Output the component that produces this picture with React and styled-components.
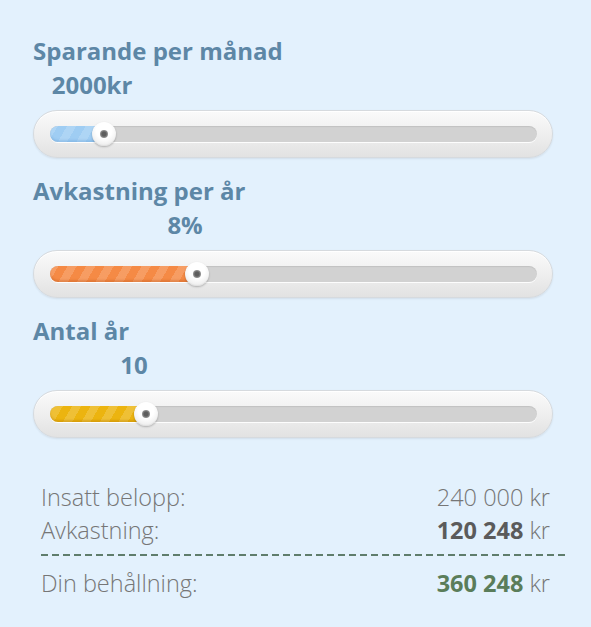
import React from "react";
import styled, { createGlobalStyle } from "styled-components";

const Global = createGlobalStyle`
  html, body { margin: 0; padding: 0; background: #e3f1fd; }
  body { font-family: "Open Sans", "Noto Sans", sans-serif; }
`;

const Page = styled.div`
  width: 591px;
  height: 627px;
  box-sizing: border-box;
  display: flex;
  flex-direction: column;
  padding: 34px 25px 0 33px;
  background: #e3f1fd;
`;

const Group = styled.section`
  display: flex;
  flex-direction: column;
  margin-bottom: 16px;
`;

const Title = styled.h2`
  margin: 0;
  font-size: 24px;
  line-height: 34px;
  font-weight: 700;
  color: #5d87a6;
`;

const ValueRow = styled.div`
  position: relative;
  height: 34px;
`;

const Value = styled.span`
  position: absolute;
  top: 0;
  transform: translateX(-50%);
  font-size: 24px;
  line-height: 34px;
  font-weight: 700;
  color: #5d87a6;
  white-space: nowrap;
`;

const Pill = styled.div`
  width: 520px;
  height: 48px;
  box-sizing: border-box;
  margin-top: 8px;
  padding: 15px 15px 0 16px;
  border-radius: 24px;
  border: 1px solid #d6dade;
  background: linear-gradient(#fafafa, #f0f0f0 45%, #e2e2e2);
  box-shadow: 0 1px 2px rgba(0, 0, 0, 0.08), inset 0 1px 0 #ffffff;
`;

const Track = styled.div`
  position: relative;
  height: 16px;
  border-radius: 8px;
  background: #d2d2d2;
  box-shadow: inset 0 1px 1px rgba(0, 0, 0, 0.08), 0 1px 0 rgba(255, 255, 255, 0.9);
`;

const Fill = styled.div`
  height: 100%;
  border-radius: 8px 0 0 8px;
  background-color: ${(p) => p.$color};
  background-image: repeating-linear-gradient(
    -60deg,
    rgba(255, 255, 255, 0.16) 0 8px,
    rgba(255, 255, 255, 0) 8px 16px
  );
  box-shadow: inset 0 -2px 2px ${(p) => p.$shade};
`;

const Handle = styled.div`
  position: absolute;
  top: 50%;
  width: 24px;
  height: 24px;
  margin: -12px 0 0 -12px;
  border-radius: 50%;
  background: radial-gradient(circle at 50% 35%, #ffffff 0 40%, #e2e2e2 100%);
  box-shadow: 0 1px 2px rgba(0, 0, 0, 0.25), inset 0 -1px 1px rgba(0, 0, 0, 0.06);
  display: flex;
  align-items: center;
  justify-content: center;
`;

const Dot = styled.span`
  width: 8px;
  height: 8px;
  border-radius: 50%;
  background: radial-gradient(circle, #5e5e5e 0 35%, #a0a0a0 75%);
`;

const Results = styled.div`
  margin: 27px 0 0 8px;
  display: flex;
  flex-direction: column;
`;

const Row = styled.div`
  display: flex;
  justify-content: space-between;
  padding-right: 16px;
  font-size: 23.5px;
  line-height: 33px;
  font-weight: 300;
  color: ${(p) => p.$color || "#767676"};
`;

const Strong = styled.strong`
  font-weight: 700;
  color: ${(p) => p.$color || "#5b5b5b"};
`;

const Divider = styled.div`
  margin: 7px 0 11px;
  height: 2px;
  background: repeating-linear-gradient(to right, #5f7d6c 0 7px, transparent 7px 11px);
`;

const TRACK_W = 487;

function Slider({ title, value, fraction, color, shade }) {
  const x = fraction * TRACK_W;
  return (
    <Group>
      <Title>{title}</Title>
      <ValueRow>
        <Value style={{ left: 17 + x - 12 + "px" }}>{value}</Value>
      </ValueRow>
      <Pill>
        <Track>
          <Fill $color={color} $shade={shade} style={{ width: x + "px" }} />
          <Handle style={{ left: x + "px" }}>
            <Dot />
          </Handle>
        </Track>
      </Pill>
    </Group>
  );
}

export default function App() {
  return (
    <Page>
      <Global />
      <Slider title="Sparande per månad" value="2000kr" fraction={0.111} color="#9fcdf3" shade="rgba(90,150,210,0.3)" />
      <Slider title="Avkastning per år" value="8%" fraction={0.302} color="#f58a45" shade="rgba(190,90,30,0.35)" />
      <Slider title="Antal år" value="10" fraction={0.197} color="#ecb40f" shade="rgba(180,120,0,0.35)" />
      <Results>
        <Row>
          <span>Insatt belopp:</span>
          <span>240 000 kr</span>
        </Row>
        <Row>
          <span>Avkastning:</span>
          <span>
            <Strong>120 248</Strong> kr
          </span>
        </Row>
        <Divider />
        <Row>
          <span>Din behållning:</span>
          <span>
            <Strong $color="#5a7d5a">360 248</Strong> kr
          </span>
        </Row>
      </Results>
    </Page>
  );
}
